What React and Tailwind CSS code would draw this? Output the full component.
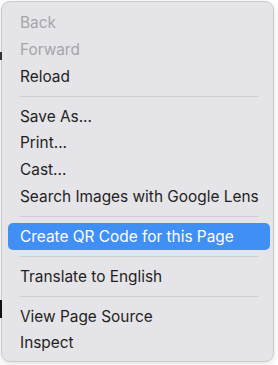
import React from "react";

const Row = ({ children, disabled, active }) => (
  <div
    className={
      "h-[26.7px] flex items-center ml-[6px] mr-[3px] px-[12px] rounded-[5px] whitespace-nowrap " +
      (active ? "bg-[#3f8ff5] text-white" : disabled ? "text-[#a6a5aa]" : "text-[#1f1f21]")
    }
  >
    {children}
  </div>
);

const Sep = () => (
  <div className="h-[13.3px] flex items-center">
    <div className="ml-[18px] w-[239px] h-px bg-[#cfced3]" />
  </div>
);

export default function App() {
  return (
    <div
      className="w-[278px] h-[365px] bg-white overflow-hidden relative"
      style={{ fontFamily: "Inter, 'Liberation Sans', sans-serif" }}
    >
      <div className="absolute left-0 top-[52px] w-[2px] h-[8px] bg-[#333]" />
      <div className="absolute left-0 top-[300px] w-[2px] h-[18px] bg-[#111]" />
      <div className="ml-[1px] mt-[1px] w-[273px] h-[361px] rounded-[9px] border border-[#cac9ce] bg-[#e5e4e9] shadow-[0_2px_6px_rgba(0,0,0,0.12)] pt-[7.5px] text-[15.4px]">
        <Row disabled>Back</Row>
        <Row disabled>Forward</Row>
        <Row>Reload</Row>
        <Sep />
        <Row>Save As...</Row>
        <Row>Print...</Row>
        <Row>Cast...</Row>
        <Row>Search Images with Google Lens</Row>
        <Sep />
        <Row active>Create QR Code for this Page</Row>
        <Sep />
        <Row>Translate to English</Row>
        <Sep />
        <Row>View Page Source</Row>
        <Row>Inspect</Row>
      </div>
    </div>
  );
}
